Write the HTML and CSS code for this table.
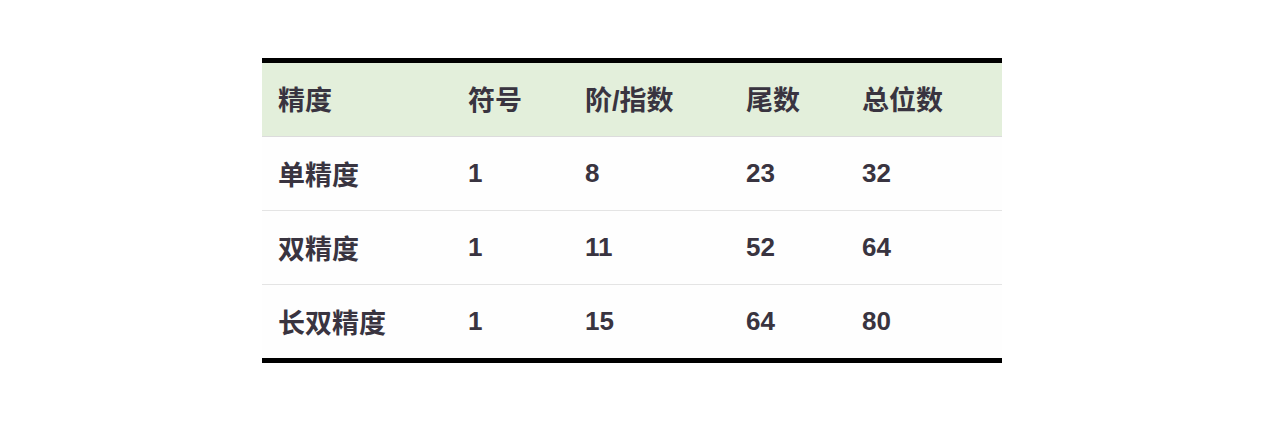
FILE: index.html
```html
<!DOCTYPE html>
<html lang="zh-CN">
<head>
<meta charset="utf-8">
<title>精度</title>
<link rel="stylesheet" href="styles.css">
</head>
<body>
<div class="page">
  <table class="prec">
    <colgroup>
      <col class="c1"><col class="c2"><col class="c3"><col class="c4"><col class="c5">
    </colgroup>
    <thead>
      <tr><th>精度</th><th>符号</th><th>阶/指数</th><th>尾数</th><th>总位数</th></tr>
    </thead>
    <tbody>
      <tr><td class="name">单精度</td><td>1</td><td>8</td><td>23</td><td>32</td></tr>
      <tr><td class="name">双精度</td><td>1</td><td>11</td><td>52</td><td>64</td></tr>
      <tr><td class="name">长双精度</td><td>1</td><td>15</td><td>64</td><td>80</td></tr>
    </tbody>
  </table>
</div>
</body>
</html>
```

FILE: styles.css
```css
html, body {
  margin: 0;
  padding: 0;
  background: #ffffff;
}
.page {
  padding: 58px 0 0 262px;
}
.prec {
  width: 740px;
  border-collapse: collapse;
  table-layout: fixed;
  border-top: 5px solid #000;
  border-bottom: 5px solid #000;
  font-family: "Liberation Sans", "Noto Sans CJK SC", sans-serif;
  font-weight: bold;
  font-size: 26px;
  color: #393440;
}
.c1 { width: 190px; }
.c2 { width: 117px; }
.c3 { width: 161px; }
.c4 { width: 116px; }
.c5 { width: 156px; }
.prec th, .prec td {
  text-align: left;
  padding: 0 0 0 16px;
  height: 73px;
  vertical-align: middle;
  font-weight: bold;
}
.prec th, .prec td.name {
  font-size: 27px;
}
.prec thead th {
  background: #e3efdb;
  border-bottom: 1px solid #dcdcdc;
  height: 70px;
  padding-bottom: 3px;
}
.prec tbody td {
  background: #fefefe;
  border-bottom: 1px solid #e4e4e4;
}
.prec tbody tr:last-child td {
  border-bottom: none;
}
```
